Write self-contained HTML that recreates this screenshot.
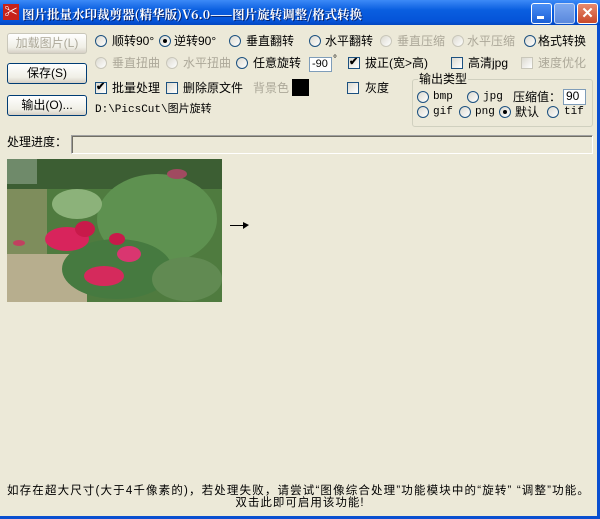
<!DOCTYPE html>
<html><head><meta charset="utf-8"><style>
*{margin:0;padding:0;box-sizing:border-box}
body{width:600px;height:519px;overflow:hidden;background:#ECE9D8;font-family:"Liberation Sans","Noto Sans CJK SC",sans-serif;font-size:12px;color:#000;position:relative}
.a{position:absolute;white-space:nowrap;line-height:14px}
.title{position:absolute;left:0;top:0;width:600px;height:25px;background:linear-gradient(#3d8af7,#0a5fe0 40%,#0553d8 85%,#0346c0);}
.title .t{position:absolute;left:22px;top:5px;color:#fff;font-weight:bold;font-size:12.5px;font-family:"Noto Serif CJK SC","Noto Sans CJK SC",serif;text-shadow:1px 1px #0a246a}
.wb{position:absolute;top:3px;width:21px;height:21px;border:1px solid #fff;border-radius:3px}
.btn{position:absolute;left:7px;width:80px;height:21px;border:1px solid #003c74;border-radius:3px;background:linear-gradient(#fff,#f0efe6 70%,#d6d0c5);text-align:center;line-height:19px}
.r{position:absolute;width:12px;height:12px;border-radius:50%;border:1px solid #1c5180;background:linear-gradient(135deg,#dcdad0,#fff)}
.r.d{border-color:#c9c7ba}
.r.on::after{content:"";position:absolute;left:3px;top:3px;width:4px;height:4px;border-radius:50%;background:#000}
.c{position:absolute;width:12px;height:12px;border:1px solid #1c5180;background:linear-gradient(135deg,#dcdad0,#fff)}
.c.d{border-color:#c9c7ba}
.c.on::after{content:"✔";position:absolute;left:0;top:-3px;font-size:11px;font-weight:bold}
.g{color:#aca899}
.in{position:absolute;background:#fff;border:1px solid #7f9db9;font-size:11px;padding-left:2px;line-height:13px}
.mono{font-family:"Liberation Mono","Noto Sans CJK SC",monospace;font-size:11px}
</style></head><body>
<div class="title">
<div style="position:absolute;left:3px;top:4px;width:16px;height:16px;background:#c8221a;color:#fff;font-size:13px;line-height:16px;text-align:center">✂</div>
<div class="t">图片批量水印裁剪器(精华版)V6.0——图片旋转调整/格式转换</div>
<div class="wb" style="left:531px;background:linear-gradient(#4b8ff5,#1b5fd6)"><div style="position:absolute;left:5px;top:12px;width:7px;height:3px;background:#fff"></div></div>
<div class="wb" style="left:554px;background:linear-gradient(#7ea9f0,#5a88dd);border-color:#c8d8f5"></div>
<div class="wb" style="left:577px;background:linear-gradient(#e88a6e,#c8482a);color:#fff;text-align:center;font-weight:bold;font-size:15px;line-height:19px">✕</div>
</div>
<div style="position:absolute;right:0;top:25px;width:3px;height:494px;background:#0a4fd0"></div>
<div style="position:absolute;left:0;bottom:0;width:600px;height:3px;background:#0a4fd0"></div>

<div class="btn g" style="top:33px;border-color:#c9c7ba">加载图片(L)</div>
<div class="btn" style="top:63px">保存(S)</div>
<div class="btn" style="top:95px">输出(O)...</div>

<div class="r" style="left:95px;top:35px"></div><div class="a" style="left:112px;top:34px">顺转90°</div>
<div class="r on" style="left:159px;top:35px"></div><div class="a" style="left:174px;top:34px">逆转90°</div>
<div class="r" style="left:229px;top:35px"></div><div class="a" style="left:246px;top:34px">垂直翻转</div>
<div class="r" style="left:309px;top:35px"></div><div class="a" style="left:325px;top:34px">水平翻转</div>
<div class="r d" style="left:380px;top:35px"></div><div class="a g" style="left:397px;top:34px">垂直压缩</div>
<div class="r d" style="left:452px;top:35px"></div><div class="a g" style="left:467px;top:34px">水平压缩</div>
<div class="r" style="left:524px;top:35px"></div><div class="a" style="left:538px;top:34px">格式转换</div>

<div class="r d" style="left:95px;top:57px"></div><div class="a g" style="left:112px;top:56px">垂直扭曲</div>
<div class="r d" style="left:166px;top:57px"></div><div class="a g" style="left:183px;top:56px">水平扭曲</div>
<div class="r" style="left:236px;top:57px"></div><div class="a" style="left:253px;top:56px">任意旋转</div>
<div class="in" style="left:309px;top:57px;width:23px;height:15px">-90</div><div class="a" style="left:333px;top:53px;font-size:10px">°</div>
<div class="c on" style="left:348px;top:57px"></div><div class="a" style="left:365px;top:56px">拔正(宽>高)</div>
<div class="c" style="left:451px;top:57px"></div><div class="a" style="left:468px;top:56px">高清jpg</div>
<div class="c d" style="left:521px;top:57px"></div><div class="a g" style="left:538px;top:56px">速度优化</div>

<div class="c on" style="left:95px;top:82px"></div><div class="a" style="left:112px;top:81px">批量处理</div>
<div class="c" style="left:166px;top:82px"></div><div class="a" style="left:183px;top:81px">删除原文件</div>
<div class="a g" style="left:253px;top:81px">背景色</div>
<div style="position:absolute;left:292px;top:79px;width:17px;height:17px;background:#000"></div>
<div class="c" style="left:347px;top:82px"></div><div class="a" style="left:365px;top:81px">灰度</div>

<div class="a mono" style="left:95px;top:103px">D:\PicsCut\图片旋转</div>

<div style="position:absolute;left:412px;top:79px;width:181px;height:48px;border:1px solid #d0d0bf;border-radius:3px"></div>
<div class="a" style="left:418px;top:72px;background:#ECE9D8;padding:0 1px">输出类型</div>
<div class="r" style="left:417px;top:91px"></div><div class="a mono" style="left:433px;top:90px">bmp</div>
<div class="r" style="left:467px;top:91px"></div><div class="a mono" style="left:483px;top:90px">jpg</div>
<div class="a" style="left:513px;top:90px">压缩值：</div>
<div class="in" style="left:563px;top:89px;width:23px;height:16px;font-size:12px">90</div>
<div class="r" style="left:417px;top:106px"></div><div class="a mono" style="left:433px;top:105px">gif</div>
<div class="r" style="left:459px;top:106px"></div><div class="a mono" style="left:475px;top:105px">png</div>
<div class="r on" style="left:499px;top:106px"></div><div class="a" style="left:515px;top:105px">默认</div>
<div class="r" style="left:547px;top:106px"></div><div class="a mono" style="left:564px;top:105px">tif</div>

<div class="a" style="left:7px;top:135px">处理进度：</div>
<div style="position:absolute;left:71px;top:135px;width:522px;height:19px;border:1px solid;border-color:#a0a0a0 #fff #fff #a0a0a0;box-shadow:inset 1px 1px #716f64"></div>

<svg style="position:absolute;left:7px;top:159px" width="215" height="143" viewBox="0 0 215 143">
<rect width="215" height="143" fill="#4f7b3f"/>
<rect width="215" height="30" fill="#3c5e33"/>
<rect x="0" y="0" width="30" height="25" fill="#6f8a6a"/>
<rect x="0" y="95" width="80" height="48" fill="#b7ae8e"/>
<rect x="0" y="30" width="40" height="65" fill="#7e8d5c"/>
<ellipse cx="150" cy="60" rx="60" ry="45" fill="#5e9150"/>
<ellipse cx="110" cy="110" rx="55" ry="30" fill="#467a40"/>
<ellipse cx="70" cy="45" rx="25" ry="15" fill="#8cb27a"/>
<ellipse cx="180" cy="120" rx="35" ry="22" fill="#618a52"/>
<ellipse cx="60" cy="80" rx="22" ry="12" fill="#d8245c"/>
<ellipse cx="78" cy="70" rx="10" ry="8" fill="#c81a4a"/>
<ellipse cx="110" cy="80" rx="8" ry="6" fill="#c81a4a"/>
<ellipse cx="122" cy="95" rx="12" ry="8" fill="#d93670"/>
<ellipse cx="97" cy="117" rx="20" ry="10" fill="#d52a5c"/>
<ellipse cx="12" cy="84" rx="6" ry="3" fill="#c04060"/>
<ellipse cx="170" cy="15" rx="10" ry="5" fill="#a04a60"/>
</svg>
<div style="position:absolute;left:230px;top:225px;width:14px;height:1px;background:#000"></div>
<div style="position:absolute;left:243px;top:222px;border-left:6px solid #000;border-top:3px solid transparent;border-bottom:4px solid transparent"></div>

<div class="a" style="left:7px;top:484px;font-size:11.5px;letter-spacing:1.15px">如存在超大尺寸(大于4千像素的)，若处理失败，请尝试“图像综合处理”功能模块中的“旋转” “调整”功能。</div>
<div class="a" style="left:0;width:600px;text-align:center;top:496px;font-size:11.5px;letter-spacing:1px">双击此即可启用该功能!</div>
</body></html>
